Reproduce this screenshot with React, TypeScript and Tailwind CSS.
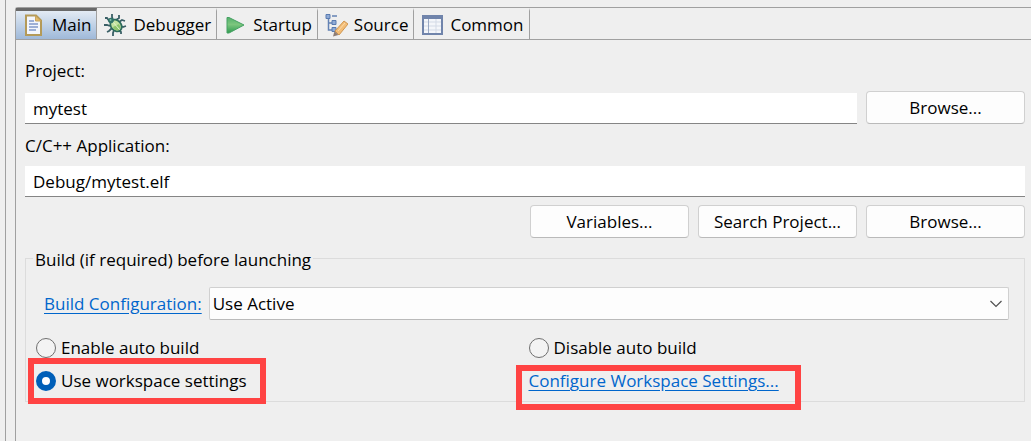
import { ReactNode, useState } from "react";

const PageIcon = () => (
  <svg width="24" height="24" viewBox="0 0 24 24" fill="none">
    <path d="M4 2.500h10l5 5V22H4z" fill="#f3f6fc" stroke="#b49a58" strokeWidth="2" />
    <path d="M13.500 3v5H19z" fill="#e3bb6c" stroke="#c9a55c" />
    <path d="M7 8h5M7 11h9M7 14h9M7 17h7" stroke="#8299c9" strokeWidth="1.500" />
  </svg>
);

const BugIcon = () => (
  <svg width="24" height="24" viewBox="0 0 24 24" fill="none">
    <path
      d="M9 1v3l1 3M16 2v3l-3 2M2 5h2l3 4M1 12h3l3 1M4 19l2-1 3-3M10 23v-3l1-3M15 17l3 2v2M18 13l2 1 3-1M16 9l3-2 3 1"
      stroke="#3a5f66"
      strokeWidth="1.800"
    />
    <ellipse cx="13" cy="12.500" rx="5" ry="6.500" transform="rotate(-42 13 12.500)" fill="#c3e3a0" stroke="#2c6b5c" strokeWidth="1.800" />
    <path d="M10 14c1 3 4 4 6 3 2-2 1-4 0-6z" fill="#8cc46c" />
    <path d="m9.500 8.500 7 8" stroke="#e6f4d2" />
    <circle cx="8" cy="7.500" r="2.800" fill="#2f7468" />
    <circle cx="7.500" cy="7" r="1" fill="#7fb8a6" />
  </svg>
);

const PlayIcon = () => (
  <svg width="24" height="24" viewBox="0 0 24 24">
    <defs>
      <linearGradient id="play" x1="0" y1="0" x2="0" y2="1">
        <stop offset="0" stopColor="#55b06c" />
        <stop offset=".45" stopColor="#7cc67e" />
        <stop offset="1" stopColor="#2f9a50" />
      </linearGradient>
    </defs>
    <path d="M4 4.500h2L21 12 6 20H4z" fill="url(#play)" stroke="#45a163" strokeLinejoin="round" />
  </svg>
);

const SourceIcon = () => (
  <svg width="24" height="24" viewBox="0 0 24 24" fill="none">
    <path d="M4.500 5v12H9M4.500 10H9M8 3h5" stroke="#6482b4" strokeWidth="1.500" />
    <path d="M2 1.500h4v4H2zM8 7.500h4v4H8zM8 14.500h4v4H8z" fill="#8fabd6" stroke="#5a7bb0" />
    <path d="m11 18 9-10 4 3-9 11z" fill="#f3bd78" stroke="#cf9650" />
    <path d="m14 18 7-8" stroke="#fbdcab" />
    <path d="m10.500 18-1.500 5.500 5.500-1.500z" fill="#8d7c74" />
  </svg>
);

const TableIcon = () => (
  <svg width="24" height="24" viewBox="0 0 24 24" fill="none">
    <path d="M3 3h19v18H3z" fill="#f4f6fa" />
    <path d="M4 9h17M4 13h17M4 17h17M16 6v14" stroke="#d3dae6" />
    <path d="M8.500 5v15" stroke="#9aa9c4" />
    <path d="M3 3h19v18H3z" stroke="#7084ab" strokeWidth="2" />
    <path d="M3 4.500h19" stroke="#7084ab" strokeWidth="3" />
  </svg>
);

const tabs = [
  { name: "Main", icon: <PageIcon /> },
  { name: "Debugger", icon: <BugIcon /> },
  { name: "Startup", icon: <PlayIcon /> },
  { name: "Source", icon: <SourceIcon /> },
  { name: "Common", icon: <TableIcon /> },
];

const Button = ({ children }: { children: ReactNode }) => (
  <button className="h-[33px] w-[159px] shrink-0 rounded-[4px] border border-[#d0d0d0] border-b-[#bababa] bg-[#fdfdfd] hover:bg-[#e5f1fb]">
    {children}
  </button>
);

const inputStyle =
  "h-[31px] w-full min-w-0 border-b border-[#858585] bg-white px-2 outline-none";

const Radio = ({ label, checked, onChange }: { label: string; checked: boolean; onChange: () => void }) => (
  <label className="flex h-6 items-center gap-[5px]">
    <input
      type="radio"
      name="build"
      checked={checked}
      onChange={onChange}
      className="size-5 appearance-none rounded-full border border-[#6f6f6f] bg-[#f3f3f3] checked:border-[6px] checked:border-[#005fb8] checked:bg-white"
    />
    {label}
  </label>
);

const Highlight = ({ className }: { className: string }) => (
  <div className={"pointer-events-none absolute border-6 border-[#ff4343] " + className} />
);

export default function App() {
  const [tab, setTab] = useState("Main");
  const [build, setBuild] = useState("workspace");

  return (
    <div className="flex min-h-screen bg-[#efefef] pl-[5px] font-['Open_Sans',sans-serif] text-[17px] leading-6 text-black">
      <div className="flex grow border-l border-[#a0a0a0] pt-[7px] pl-[9px]">
        <div className="grow rounded-tl-[3px] border-t border-l border-[#a0a0a0]">
          <div role="tablist" className="flex h-8 border-b border-[#a0a0a0]">
            {tabs.map(({ name, icon }) => (
              <button
                key={name}
                role="tab"
                aria-selected={tab === name}
                onClick={() => setTab(name)}
                className="flex items-center gap-1.5 border-t-3 border-r border-t-transparent border-r-[#a0a0a0] pr-[5px] pl-1.5 aria-selected:border-t-[#696969] aria-selected:bg-linear-to-b aria-selected:from-[#e3ebf4] aria-selected:to-[#9fb9d9]"
              >
                {icon}
                {name}
              </button>
            ))}
          </div>

          <form className="pt-[19px] pr-1.5 pl-[9px]" onSubmit={(e) => e.preventDefault()}>
            <label htmlFor="project" className="block">Project:</label>
            <div className="mt-2 flex items-end gap-[9px]">
              <input id="project" defaultValue="mytest" className={inputStyle} />
              <Button>Browse...</Button>
            </div>
            <label htmlFor="application" className="mt-2.5 block">C/C++ Application:</label>
            <input id="application" defaultValue="Debug/mytest.elf" className={inputStyle + " mt-2 block"} />
            <div className="mt-2 flex justify-end gap-[9px]">
              <Button>Variables...</Button>
              <Button>Search Project...</Button>
              <Button>Browse...</Button>
            </div>

            <fieldset className="mt-1.5 border border-[#dcdcdc] pr-[15px] pb-2 pl-2.5">
              <legend className="-ml-[3px] pt-1 pr-0.5 pl-0.5">Build (if required) before launching</legend>
              <div className="mt-[15px] flex items-center gap-[7px] pl-2">
                <a href="#" className="shrink-0 text-[#0066cc] underline underline-offset-3">
                  Build Configuration:
                </a>
                <div className="relative grow">
                  <select
                    aria-label="Build Configuration"
                    className="block h-[33px] w-full appearance-none rounded-[2px] border border-[#d0d0d0] border-b-[#bababa] bg-[#fdfdfd] px-[3px]"
                  >
                    <option>Use Active</option>
                  </select>
                  <svg
                    className="pointer-events-none absolute top-[11px] right-[7px]"
                    width="12"
                    height="12"
                    fill="none"
                    stroke="#505050"
                    strokeWidth="1.200"
                  >
                    <path d="m.5 3 5.500 5.500L11.500 3" />
                  </svg>
                </div>
              </div>
              <div className="mt-4 grid grid-cols-2 gap-x-3 gap-y-[9px]">
                <Radio label="Enable auto build" checked={build === "enable"} onChange={() => setBuild("enable")} />
                <Radio label="Disable auto build" checked={build === "disable"} onChange={() => setBuild("disable")} />
                <div className="relative justify-self-start">
                  <Radio
                    label="Use workspace settings"
                    checked={build === "workspace"}
                    onChange={() => setBuild("workspace")}
                  />
                  <Highlight className="-top-[11px] -right-[19px] -bottom-[11px] -left-2" />
                </div>
                <div className="relative justify-self-start">
                  <a href="#" className="text-[#0066cc] underline underline-offset-3">
                    Configure Workspace Settings...
                  </a>
                  <Highlight className="-top-1 -right-[22px] -bottom-[17px] -left-[13px]" />
                </div>
              </div>
            </fieldset>
          </form>
        </div>
      </div>
    </div>
  );
}
